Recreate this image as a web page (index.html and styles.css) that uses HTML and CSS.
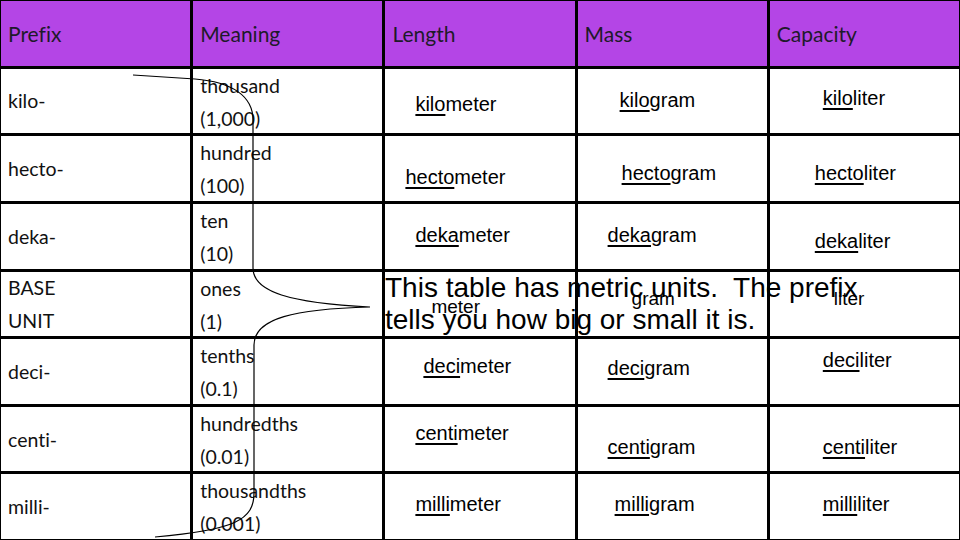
FILE: index.html
```html
<!DOCTYPE html>
<html>
<head>
<meta charset="utf-8">
<link rel="stylesheet" href="styles.css">
</head>
<body>
<div class="sheet">
  <div class="grid">
    <div class="cell head">Prefix</div>
    <div class="cell head">Meaning</div>
    <div class="cell head">Length</div>
    <div class="cell head">Mass</div>
    <div class="cell head">Capacity</div>

    <div class="cell prefix">kilo-</div>
    <div class="cell meaning">thousand<br>(1,000)</div>
    <div class="cell unit x30 t24"><span><u>kilo</u>meter</span></div>
    <div class="cell unit x42 t20"><span><u>kilo</u>gram</span></div>
    <div class="cell unit x53 t18"><span><u>kilo</u>liter</span></div>

    <div class="cell prefix">hecto-</div>
    <div class="cell meaning">hundred<br>(100)</div>
    <div class="cell unit x20 t30"><span><u>hecto</u>meter</span></div>
    <div class="cell unit x44 t26"><span><u>hecto</u>gram</span></div>
    <div class="cell unit x45 t26"><span><u>hecto</u>liter</span></div>

    <div class="cell prefix">deka-</div>
    <div class="cell meaning">ten<br>(10)</div>
    <div class="cell unit x30 t20"><span><u>deka</u>meter</span></div>
    <div class="cell unit x30 t20"><span><u>deka</u>gram</span></div>
    <div class="cell unit x45 t26"><span><u>deka</u>liter</span></div>

    <div class="cell prefix">BASE<br>UNIT</div>
    <div class="cell meaning">ones<br>(1)</div>
    <div class="cell base x46 t24">meter</div>
    <div class="cell base x54 t16">gram</div>
    <div class="cell base x64 t16">liter</div>

    <div class="cell prefix">deci-</div>
    <div class="cell meaning">tenths<br>(0.1)</div>
    <div class="cell unit x38 t16"><span><u>deci</u>meter</span></div>
    <div class="cell unit x30 t18"><span><u>deci</u>gram</span></div>
    <div class="cell unit x53 t10"><span><u>deci</u>liter</span></div>

    <div class="cell prefix">centi-</div>
    <div class="cell meaning">hundredths<br>(0.01)</div>
    <div class="cell unit x30 t15"><span><u>centi</u>meter</span></div>
    <div class="cell unit x30 t29"><span><u>centi</u>gram</span></div>
    <div class="cell unit x53 t29"><span><u>centi</u>liter</span></div>

    <div class="cell prefix">milli-</div>
    <div class="cell meaning">thousandths<br>(0.001)</div>
    <div class="cell unit x30 t19"><span><u>milli</u>meter</span></div>
    <div class="cell unit x37 t19"><span><u>milli</u>gram</span></div>
    <div class="cell unit x53 t19"><span><u>milli</u>liter</span></div>
  </div>

  <p class="note">This table has metric units.&nbsp; The prefix<br>tells you how big or small it is.</p>

  <svg class="brace" width="960" height="540" viewBox="0 0 960 540">
    <path d="M133,75 L195,79 C232,82 253,96 253,120 L253,268 C253,292 290,303 370,307 C295,309 254,318 254,345 L254,493 C254,520 235,530 155,537" fill="none" stroke="#000" stroke-width="1.2"/>
  </svg>
</div>
</body>
</html>
```

FILE: styles.css
```css
html, body {
  margin: 0;
  padding: 0;
  background: #fff;
}

.sheet {
  position: relative;
  width: 960px;
  height: 540px;
  overflow: hidden;
}

.grid {
  box-sizing: border-box;
  width: 960px;
  height: 540px;
  padding: 1px;
  display: grid;
  grid-template-columns: repeat(5, 1fr);
  grid-template-rows: repeat(8, 1fr);
  gap: 3px;
  background: #000;
}

.cell {
  background: #fff;
  color: #111;
  min-width: 0;
  min-height: 0;
  font-variant-ligatures: none;
}

.head {
  background: #b445e6;
  color: #1e1a2a;
  font-family: Lato, "Open Sans", sans-serif;
  font-size: 21px;
  display: flex;
  align-items: center;
  padding-left: 7px;
}

.prefix {
  font-family: Lato, "Open Sans", sans-serif;
  font-size: 19.5px;
  line-height: 33px;
  display: flex;
  align-items: center;
  padding-left: 7px;
}

.meaning {
  font-family: Lato, "Open Sans", sans-serif;
  font-size: 19.5px;
  line-height: 33px;
  padding-left: 7px;
  white-space: nowrap;
}

.unit,
.base {
  font-family: "Liberation Sans", Arial, sans-serif;
  font-size: 20px;
  line-height: 23px;
  color: #000;
  white-space: nowrap;
}

.base {
  font-size: 19px;
  line-height: 22px;
}

.unit u {
  text-decoration: underline;
  text-decoration-thickness: 2px;
  text-underline-offset: 3px;
}

.x20 { padding-left: 20px; }
.x30 { padding-left: 30px; }
.x37 { padding-left: 37px; }
.x38 { padding-left: 38px; }
.x42 { padding-left: 42px; }
.x44 { padding-left: 44px; }
.x45 { padding-left: 45px; }
.x46 { padding-left: 46px; }
.x53 { padding-left: 53px; }
.x54 { padding-left: 54px; }
.x64 { padding-left: 64px; }

.t10 { padding-top: 10px; }
.t15 { padding-top: 15px; }
.t16 { padding-top: 16px; }
.t18 { padding-top: 18px; }
.t19 { padding-top: 19px; }
.t20 { padding-top: 20px; }
.t24 { padding-top: 24px; }
.t26 { padding-top: 26px; }
.t29 { padding-top: 29px; }
.t30 { padding-top: 30px; }

.note {
  position: absolute;
  left: 385px;
  top: 272px;
  margin: 0;
  font-family: "Liberation Sans", Arial, sans-serif;
  font-size: 28px;
  line-height: 32px;
  color: #000;
  white-space: nowrap;
}

.brace {
  position: absolute;
  left: 0;
  top: 0;
  pointer-events: none;
}
```
